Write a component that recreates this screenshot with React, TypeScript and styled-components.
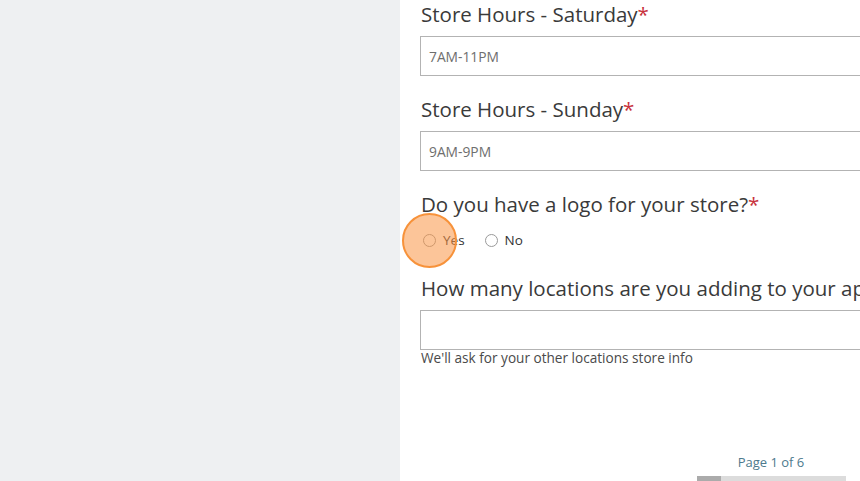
import React from "react";
import styled, { createGlobalStyle } from "styled-components";

const Global = createGlobalStyle`
  html, body { margin: 0; padding: 0; overflow: hidden; background: #ffffff; }
  body { width: 860px; height: 481px; font-family: "Open Sans", "Liberation Sans", sans-serif; }
  * { box-sizing: border-box; }
`;

const Page = styled.div`
  display: flex;
  width: 860px;
  height: 481px;
  overflow: hidden;
`;

const Side = styled.div`
  flex: 0 0 400px;
  background: #eef0f2;
`;

const Main = styled.div`
  position: relative;
  flex: 0 0 742px;
  display: flex;
  flex-direction: column;
  background: #ffffff;
`;

const Form = styled.div`
  display: flex;
  flex-direction: column;
  padding-left: 20px;
  padding-right: 20px;
`;

const Field = styled.div<{ $gap?: number }>`
  display: flex;
  flex-direction: column;
  margin-bottom: ${(p) => p.$gap ?? 19}px;
`;

const Label = styled.div`
  font-size: 20.5px;
  line-height: 28px;
  color: #3a3a3a;
  margin-bottom: 8px;
  padding-left: 1px;
  white-space: nowrap;
`;

const Req = styled.span`
  color: #c8323c;
`;

const Input = styled.div`
  height: 40px;
  border: 1px solid #b3b3b3;
  display: flex;
  align-items: center;
  padding-left: 8px;
  font-size: 13.8px;
  color: #6e6e6e;
`;

const Help = styled.div`
  font-size: 13.6px;
  line-height: 16px;
  margin-top: 0px;
  padding-left: 1px;
  color: #4a4a4a;
`;

const Radios = styled.div`
  display: flex;
  align-items: center;
  height: 20px;
  margin-top: 4px;
  padding-left: 3px;
  gap: 20px;
`;

const Option = styled.label`
  display: flex;
  align-items: center;
  gap: 7px;
  font-size: 13.5px;
  color: #333;
`;

const Dot = styled.span`
  width: 13px;
  height: 13px;
  border: 1px solid #9a9a9a;
  border-radius: 50%;
  background: #fff;
`;

const Spot = styled.div`
  position: absolute;
  left: 2px;
  top: 213px;
  width: 55px;
  height: 55px;
  border-radius: 50%;
  background: rgba(250, 150, 70, 0.55);
  border: 2px solid #f7923a;
  pointer-events: none;
`;

const Footer = styled.div`
  margin-top: auto;
  display: flex;
  flex-direction: column;
  align-items: center;
  gap: 6px;
`;

const PageText = styled.div`
  font-size: 13px;
  line-height: 16px;
  color: #4d7a8d;
`;

const Track = styled.div`
  width: 149px;
  height: 5px;
  background: #dcdcdc;
  display: flex;
`;

const Fill = styled.div`
  height: 100%;
  background: #ababab;
`;

export default function App() {
  return (
    <>
      <Global />
      <Page>
        <Side />
        <Main>
          <Form>
            <Field>
              <Label>
                Store Hours - Saturday<Req>*</Req>
              </Label>
              <Input>7AM-11PM</Input>
            </Field>
            <Field>
              <Label>
                Store Hours - Sunday<Req>*</Req>
              </Label>
              <Input>9AM-9PM</Input>
            </Field>
            <Field $gap={24}>
              <Label>
                Do you have a logo for your store?<Req>*</Req>
              </Label>
              <Radios>
                <Option>
                  <Dot />
                  Yes
                </Option>
                <Option>
                  <Dot />
                  No
                </Option>
              </Radios>
            </Field>
            <Field $gap={0}>
              <Label>How many locations are you adding to your app?</Label>
              <Input />
              <Help>We'll ask for your other locations store info</Help>
            </Field>
          </Form>
          <Footer>
            <PageText>Page 1 of 6</PageText>
            <Track>
              <Fill style={{ width: `${(1 / 6) * 100}%` }} />
            </Track>
          </Footer>
          <Spot />
        </Main>
      </Page>
    </>
  );
}
